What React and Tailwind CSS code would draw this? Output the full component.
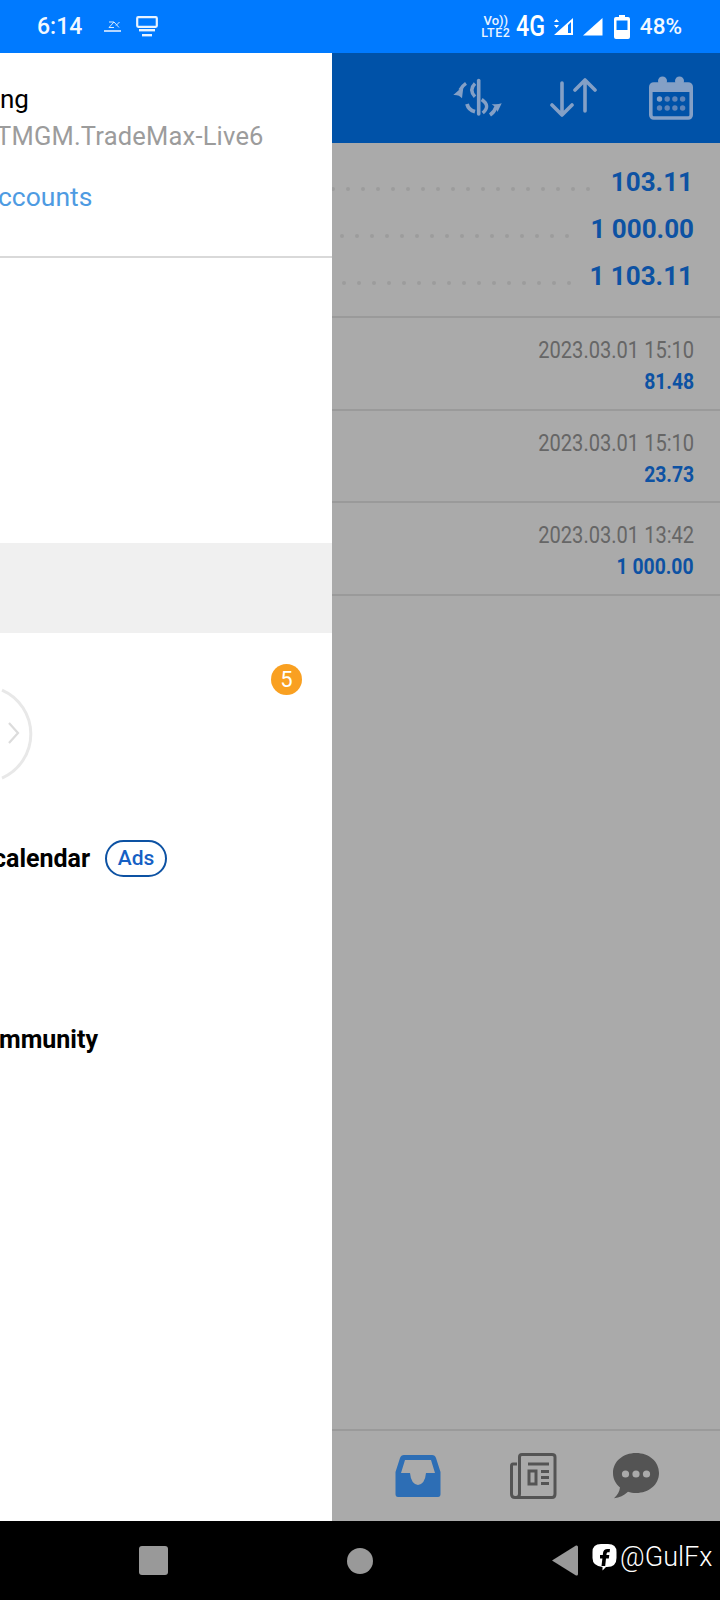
const roboto = { fontFamily: 'Roboto, "Liberation Sans", sans-serif' };

function Dots({ count }) {
  return (
    <div className="flex-1 flex justify-end items-center gap-[11px] overflow-hidden min-w-0 mt-[12px]">
      {Array.from({ length: count }).map((_, i) => (
        <span key={i} className="w-1 h-1 rounded-full bg-[#9c9c9c] shrink-0" />
      ))}
    </div>
  );
}

function Balance({ value, gap, pr }) {
  return (
    <div className={`flex items-center h-[47px] ${pr}`}>
      <Dots count={20} />
      <div className={`${gap} text-[26px] font-bold text-[#0d52a3] whitespace-nowrap`}>{value}</div>
    </div>
  );
}

function Deal({ time, amount }) {
  return (
    <div className="h-[92.6px] border-b-2 border-[#9a9a9a] flex flex-col items-end pr-[26px] pt-[17px]">
      <div className="text-[24.5px] leading-[29px] text-[#666666] origin-right scale-x-[0.82] whitespace-nowrap">{time}</div>
      <div className="text-[22.5px] leading-[26px] mt-[4px] font-bold text-[#0d52a3] origin-right scale-x-[0.86] whitespace-nowrap">{amount}</div>
    </div>
  );
}

function MonitorIcon() {
  return (
    <svg width="22" height="21" viewBox="0 0 22 21" className="ml-[14px]">
      <rect x="1.2" y="1.2" width="19.6" height="9.6" rx="1" fill="none" stroke="#e8f3ff" strokeWidth="2.2" />
      <rect x="3" y="13" width="16" height="2.4" fill="#e8f3ff" />
      <rect x="6" y="18" width="10" height="2.4" fill="#e8f3ff" />
    </svg>
  );
}

function ExnessIcon() {
  return (
    <svg width="18" height="12" viewBox="0 0 18 12" className="ml-[22px]">
      <path d="M5 1 H10 L5 6.5 H10 M10 1 L15 6.5 M15.5 1 L12 4.5" fill="none" stroke="#d7eaff" strokeWidth="1" />
      <rect x="0" y="9" width="17" height="2" fill="#b5d7ff" />
    </svg>
  );
}

function StatusRight() {
  return (
    <div className="flex items-center text-white">
      <div className="w-[28px] h-[24px] flex flex-col items-center text-[#e8f3ff] font-medium mr-[6px]">
        <span className="text-[13px] leading-[12px] h-[12px]">Vo))</span>
        <span className="text-[12.5px] leading-[12px] tracking-[0.6px]">LTE2</span>
      </div>
      <span className="text-[29px] leading-none font-medium origin-left scale-x-[0.8] w-[28px] whitespace-nowrap">4G</span>
      <svg width="24" height="18" viewBox="0 0 24 18" className="ml-[7px]">
        <path d="M3 4 L5.5 1 L8 4 Z M3 7 L5.5 10 L8 7 Z" fill="white" />
        <path d="M3 17 L22 0 V17 Z M17 7 V15 H20 V4 Z" fill="white" fillRule="evenodd" />
      </svg>
      <svg width="20" height="18" viewBox="0 0 20 18" className="ml-[8px]">
        <path d="M0 17.5 L19.5 0 V17.5 Z" fill="white" />
      </svg>
      <svg width="16" height="24" viewBox="0 0 16 24" className="ml-[11px]">
        <path fillRule="evenodd" d="M5 0 H11 V2 H14 Q16 2 16 4 V22 Q16 24 14 24 H2 Q0 24 0 22 V4 Q0 2 2 2 H5 Z M2.5 5.5 V15 H13.5 V5.5 Z" fill="white" />
      </svg>
      <span className="ml-[10px] text-[22.5px] leading-none font-medium text-[#f2f8ff] mr-[38px]">48%</span>
    </div>
  );
}

function ExchangeIcon() {
  return (
    <svg width="50" height="40" viewBox="0 0 50 40" fill="none" stroke="#84a0c6">
      <path d="M26.7 2.5 V36" strokeWidth="3.6" strokeLinecap="round" />
      <path d="M23 5.5 Q16.5 12 23 18.7" strokeWidth="3.4" />
      <path d="M15 26 Q16.5 32 23 33.7" strokeWidth="3.8" />
      <path d="M29.7 21.5 Q39 28 30.7 35" strokeWidth="3.4" />
      <path d="M14 5.3 Q10 8 8 12" strokeWidth="3.4" />
      <path d="M1.3 17 L11.5 8 L10 20.3 Q7 16.5 1.3 17 Z" fill="#84a0c6" stroke="none" />
      <path d="M38 37 Q42.5 34 44 29" strokeWidth="3.6" />
      <path d="M39.7 26 Q45 27 49.7 25.3 L45.5 34 Q44 29 39.7 26 Z" fill="#84a0c6" stroke="none" />
    </svg>
  );
}

function ArrowsIcon() {
  return (
    <svg width="47" height="40" viewBox="0 0 47 40" fill="none" stroke="#84a0c6" strokeWidth="3.6" strokeLinecap="round" strokeLinejoin="round">
      <path d="M12 5 V37 M2 27 L12 37 L22 27" />
      <path d="M35 33 V2 M25 12 L35 2 L45 12" />
    </svg>
  );
}

function CalendarIcon() {
  const dots = [];
  for (let r = 0; r < 2; r++) for (let c = 0; c < 4; c++) dots.push(<circle key={`${r}${c}`} cx={10.5 + c * 7.7} cy={23 + r * 9} r="2.7" fill={r === 0 && c === 0 ? '#84a0c6' : '#5f85b9'} />);
  return (
    <svg width="44" height="44" viewBox="0 0 44 44">
      <rect x="1.8" y="8" width="40.4" height="34" rx="3" fill="none" stroke="#84a0c6" strokeWidth="3.6" />
      <rect x="2" y="8" width="40" height="8" fill="#84a0c6" />
      <circle cx="13.5" cy="5" r="4.5" fill="#84a0c6" />
      <circle cx="30.5" cy="5" r="4.5" fill="#84a0c6" />
      {dots}
    </svg>
  );
}

function InboxIcon() {
  return (
    <svg width="46" height="42" viewBox="0 0 46 42">
      <path fillRule="evenodd" fill="#2d6eb5" d="M9 0 H37 Q40 0 41 3 L45.5 17 V39 Q45.5 42 43 42 H3 Q0.5 42 0.5 39 V17 L5 3 Q6 0 9 0 Z M10 5 L6 18 H15 Q16 29 23 30 Q30 29 31 18 H40 L36 5 Z" />
    </svg>
  );
}

function NewsIcon() {
  return (
    <svg width="47" height="46" viewBox="0 0 47 46" fill="none" stroke="#545454">
      <path d="M7 11 H3 Q1.5 11 1.5 13 V41 Q1.5 44.5 5 44.5 H42 Q45 44.5 45 41 V4 Q45 1.5 42 1.5 H12 Q9.5 1.5 9.5 4 V41 Q9.5 44.5 6 44.5" strokeWidth="3" />
      <path d="M18 11 H39" strokeWidth="3" />
      <rect x="19" y="18" width="7" height="13" strokeWidth="3" />
      <path d="M31 18.5 H39 M31 24.5 H39 M31 30.5 H39" strokeWidth="3" />
    </svg>
  );
}

function ChatIcon() {
  return (
    <svg width="46" height="46" viewBox="0 0 46 46">
      <path fill="#545454" d="M23 0 C36 0 46 8.5 46 20 C46 31.5 36 40 23 40 C20 40 17.5 39.6 15 38.8 C11 42.5 6.5 45 1 45.2 C4.5 42 6.5 38.5 7 34.5 C2.6 30.8 0 25.8 0 20 C0 8.5 10 0 23 0 Z" />
      <circle cx="12.5" cy="21" r="3.6" fill="#aaaaaa" />
      <circle cx="23" cy="21" r="3.6" fill="#aaaaaa" />
      <circle cx="33.5" cy="21" r="3.6" fill="#aaaaaa" />
    </svg>
  );
}

function FacebookIcon() {
  return (
    <svg width="25" height="28" viewBox="0 0 25 28">
      <path fillRule="evenodd" fill="white" d="M9 1 H16 Q24.5 1 24.5 9 V15 Q24.5 24 15 24 H14 L10.5 27.5 V24 Q0.5 23 0.5 15 V9 Q0.5 1 9 1 Z M18 6 H15.5 Q11.5 6 11 10 L10.8 12 H8 V15.5 H10.4 L9.5 23 H13.2 L14 15.5 H16.8 L17.3 12 H14.4 L14.6 10.5 Q14.8 9.3 16 9.3 H17.6 Z" />
    </svg>
  );
}

export default function App() {
  return (
    <div className="w-[720px] h-[1600px] flex flex-col overflow-hidden bg-black" style={roboto}>
      <div className="h-[53px] bg-[#007aff] flex items-center justify-between shrink-0">
        <div className="flex items-center pl-[37px] text-[#f2f8ff]">
          <span className="text-[23px] leading-none font-medium">6:14</span>
          <ExnessIcon />
          <MonitorIcon />
        </div>
        <StatusRight />
      </div>

      <div className="flex flex-1 min-h-0">
        <div className="w-[332px] bg-white overflow-hidden flex flex-col shrink-0">
          <div className="h-[205px] border-b-2 border-[#d9d9d9] pt-[31px] shrink-0">
            <div className="text-[26px] leading-[30px] text-black">ng</div>
            <div className="text-[25.5px] leading-[30px] text-[#9c9c9c] -ml-[4px] tracking-[0.2px] mt-[7px] whitespace-nowrap">TMGM.TradeMax-Live6</div>
            <div className="text-[26.5px] leading-[30px] text-[#4e9be2] -ml-[2px] mt-[31px] whitespace-nowrap">ccounts</div>
          </div>
          <div className="h-[285px] shrink-0" />
          <div className="h-[90px] bg-[#f0f0f0] shrink-0" />
          <div className="relative flex-1">
            <span className="absolute left-[271px] top-[31px] w-[31px] h-[31px] rounded-full bg-[#f9a021] text-white text-[22px] flex items-center justify-center">5</span>
            <svg width="34" height="96" viewBox="0 0 34 96" className="mt-[54px]" fill="none">
              <path d="M2 3 A 48 48 0 0 1 2 91" stroke="#e8e8e8" strokeWidth="3" />
              <path d="M9 36 L18 46 L9 56" stroke="#dcdcdc" strokeWidth="2.2" />
            </svg>
            <div className="flex items-center mt-[57px] -ml-[7px]">
              <span className="text-[25px] leading-[30px] font-bold text-black">calendar</span>
              <span className="ml-[15px] h-[37px] w-[62px] rounded-full border-2 border-[#0d52a3] text-[#1560c4] text-[21px] font-medium flex items-center justify-center">Ads</span>
            </div>
            <div className="text-[25px] leading-[30px] font-bold text-black mt-[148px] -ml-[1px]">mmunity</div>
          </div>
        </div>

        <div className="flex-1 flex flex-col bg-[#aaaaaa] min-w-0">
          <div className="h-[90px] bg-[#0052a8] flex items-center shrink-0">
            <div className="ml-[120px]"><ExchangeIcon /></div>
            <div className="ml-[48px]"><ArrowsIcon /></div>
            <div className="ml-[52px]"><CalendarIcon /></div>
          </div>
          <div className="h-[175px] border-b-2 border-[#9a9a9a] pt-[11px] shrink-0">
            <div className="mt-[5px]">
              <Balance value="103.11" gap="ml-[21px]" pr="pr-[27px]" />
              <Balance value="1 000.00" gap="ml-[21px]" pr="pr-[26px]" />
              <Balance value="1 103.11" gap="ml-[18px]" pr="pr-[27px]" />
            </div>
          </div>
          <Deal time="2023.03.01 15:10" amount="81.48" />
          <Deal time="2023.03.01 15:10" amount="23.73" />
          <Deal time="2023.03.01 13:42" amount="1 000.00" />
          <div className="flex-1" />
          <div className="h-[92px] border-t-2 border-[#9a9a9a] flex items-center shrink-0">
            <div className="ml-[63px]"><InboxIcon /></div>
            <div className="ml-[69px]"><NewsIcon /></div>
            <div className="ml-[56px]"><ChatIcon /></div>
          </div>
        </div>
      </div>

      <div className="h-[79px] bg-black flex items-center shrink-0">
        <div className="ml-[139px] w-[29px] h-[29px] rounded-[3px] bg-[#999999]" />
        <div className="ml-[179px] w-[26px] h-[26px] rounded-full bg-[#999999]" />
        <svg width="26" height="31" viewBox="0 0 26 31" className="ml-[179px]">
          <path d="M0 15.5 L24 0.5 Q26 0 26 2 V29 Q26 31 24 30.5 Z" fill="#999999" />
        </svg>
        <div className="ml-[14px] -mt-[7px]"><FacebookIcon /></div>
        <span className="ml-[3px] -mt-[7px] text-[27px] leading-none font-light text-white whitespace-nowrap">@GulFx</span>
      </div>
    </div>
  );
}
